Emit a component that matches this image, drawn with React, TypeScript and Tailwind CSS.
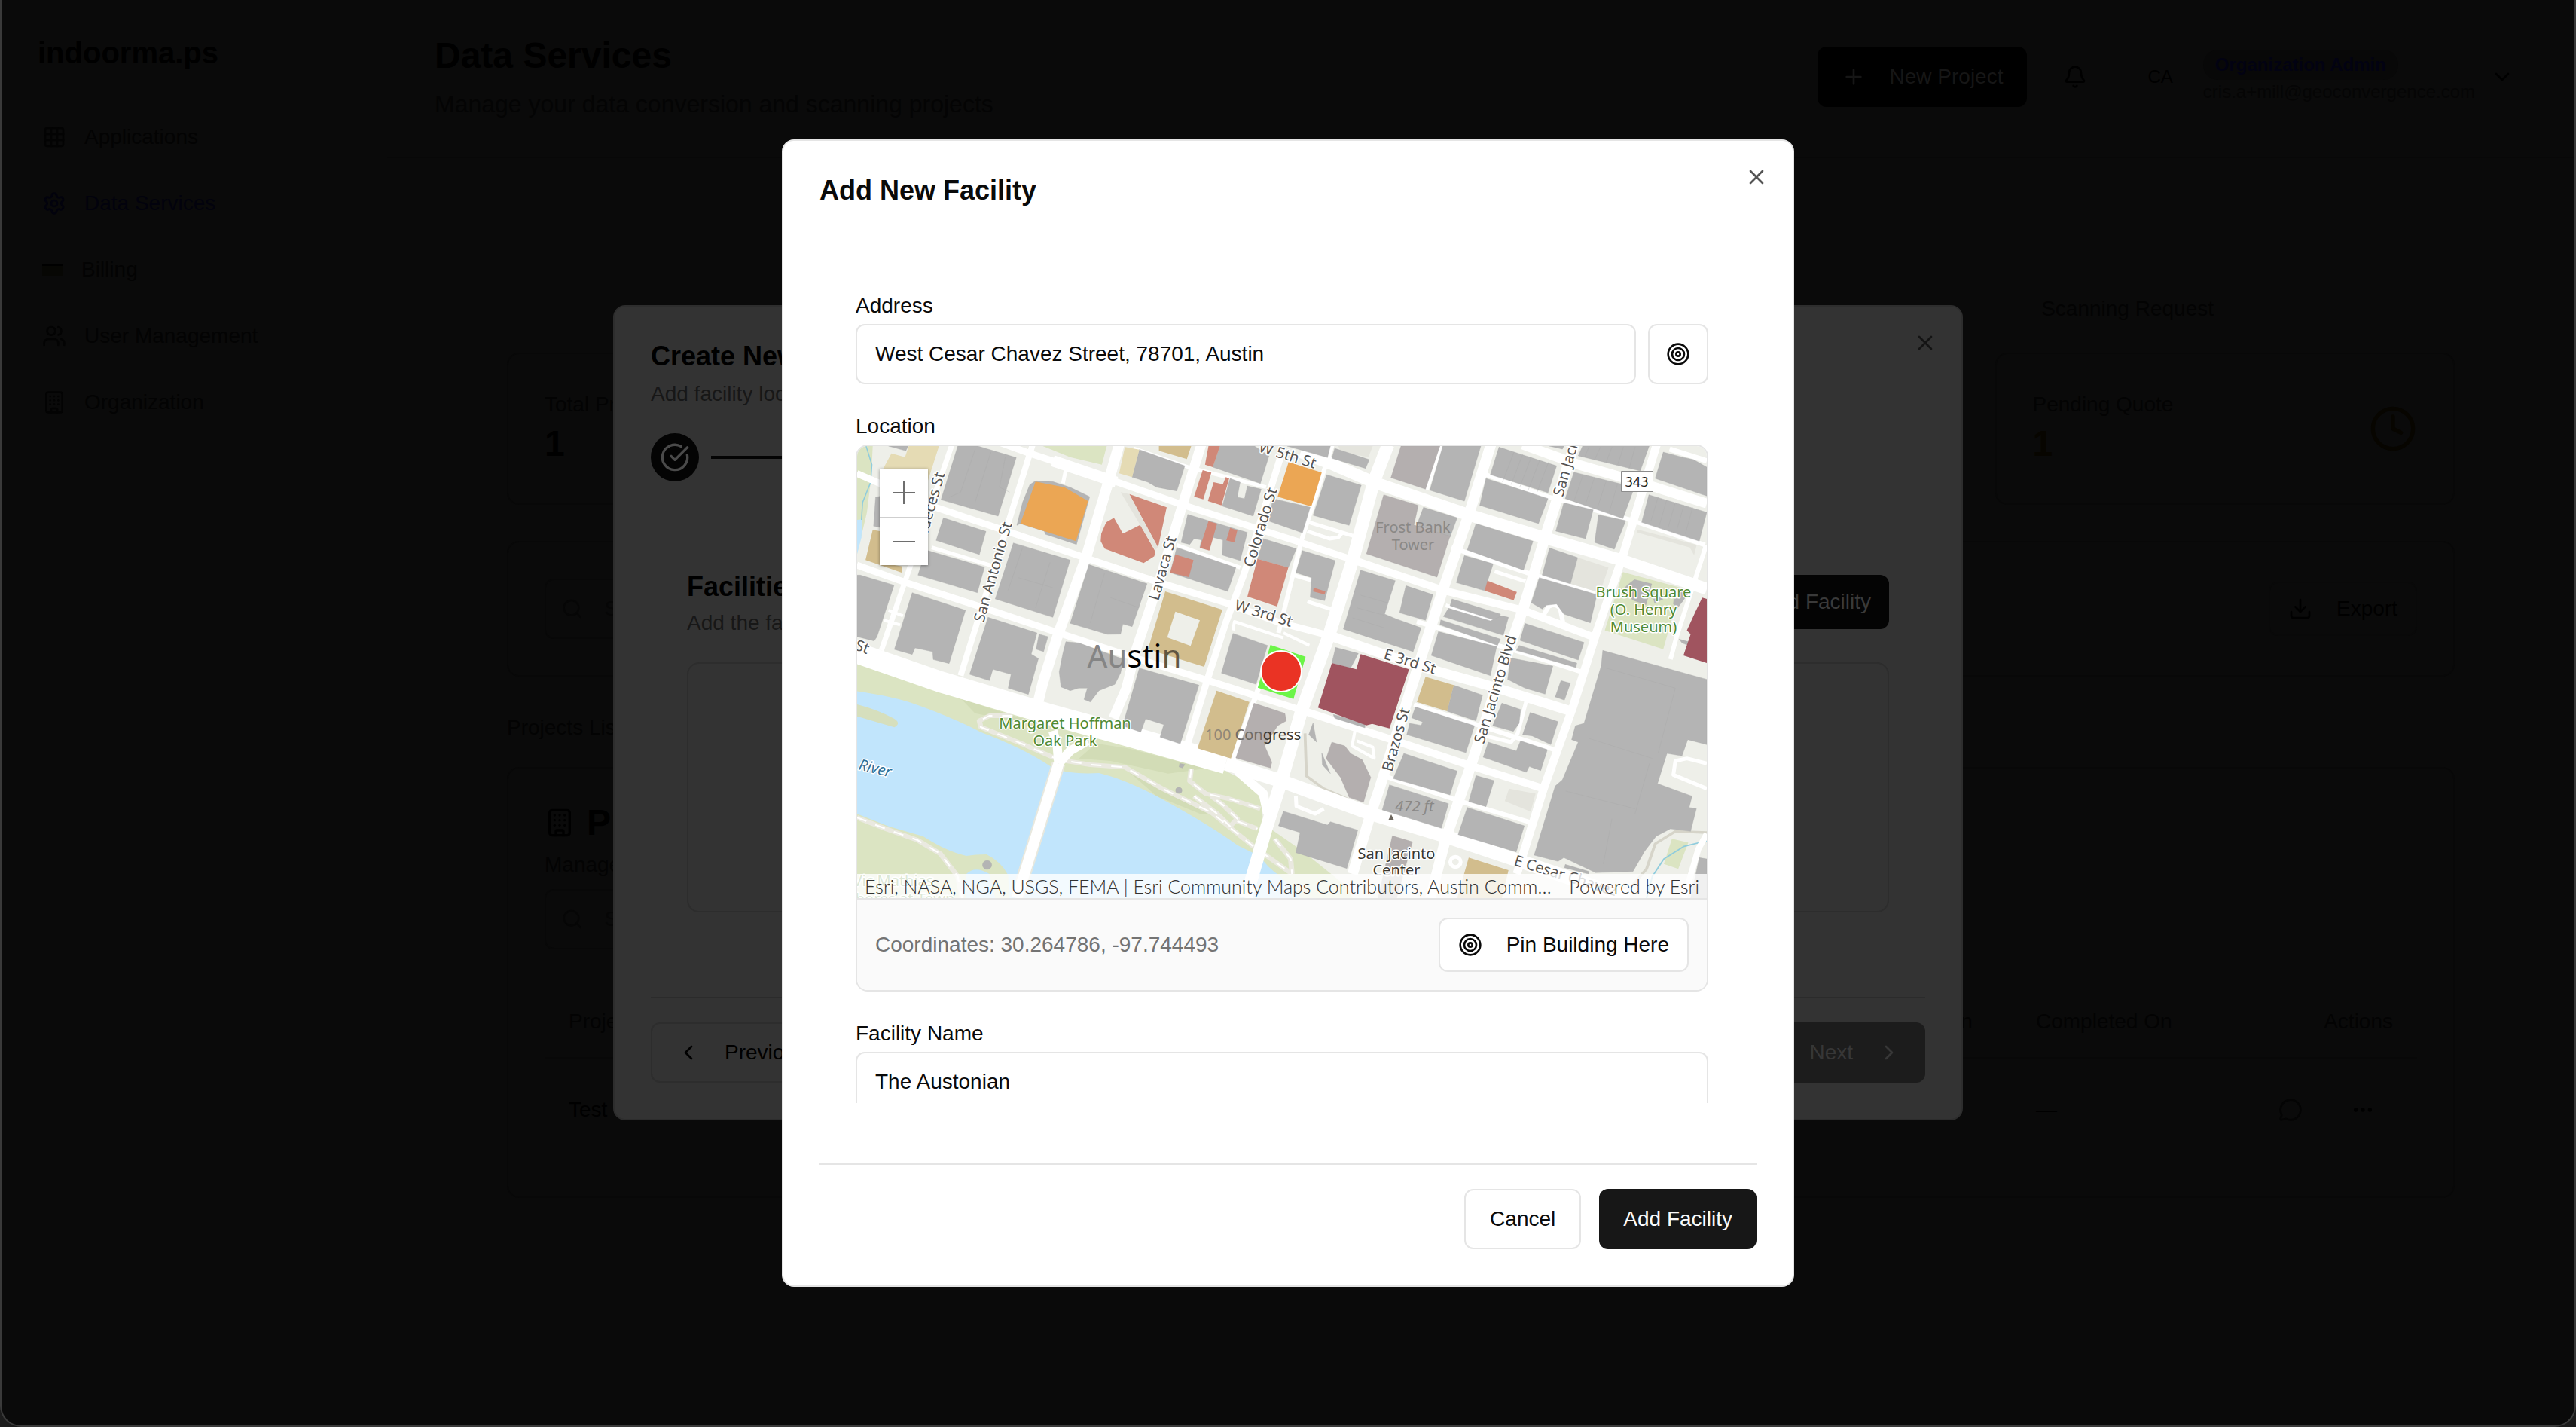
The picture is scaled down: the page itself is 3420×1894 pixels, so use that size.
import { useState } from 'react';
import {
  Bell,
  Building,
  ChevronDown,
  ChevronLeft,
  ChevronRight,
  CircleCheckBig,
  Clock,
  Download,
  Ellipsis,
  Grid3x3,
  MessageCircle,
  Plus,
  Search,
  Settings,
  Target,
  Users,
  X,
} from 'lucide-react';

// Building footprints, grouped by fill. The right half of the sheet is shifted by EAST.
const EAST = 'translate(1463 0)';

const WEST_GRAY = [
  '370,36 440,36 573,82 510,315 312,250',
  '320,322 468,376 445,468 295,412',
  '260,450 463,518 438,620 232,550',
  '20,550 32,550 149,590 90,795 80,812 20,795',
  '212,620 397,690 340,902 285,886 283,855 222,840 212,866 150,846',
  '563,422 760,490 700,718 500,645',
  '475,718 645,780 625,865 650,882 615,1025 545,1000 555,945 492,925 480,970 411,945',
  '652,785 683,795 668,855 642,845',
  '825,508 1027,584 975,755 943,745 935,785 890,786 760,742',
  '640,175 700,178 760,200 828,238 782,428 675,388 670,375 587,345 575,352 595,260 620,190',
  '1000,50 1158,115 1130,215 1060,200 1030,180 975,160',
  '1280,36 1400,36 1450,75 1420,185 1255,120',
  '1315,165 1350,180 1340,240 1365,245 1375,195 1423,208 1395,315 1288,275',
  '1168,308 1375,380 1350,492 1288,470 1290,410 1255,400 1243,450 1210,440 1215,410 1190,405 1175,428 1145,420',
  '1130,440 1335,520 1307,615 1107,540',
  '1430,405 1545,445 1517,520 1410,485',
  '1325,782 1445,830 1405,985 1285,940',
  '745,815 790,820 945,885 935,940 915,985 860,1010 830,1055 808,1045 820,1000 790,1000 760,1010 728,995 722,935 735,860',
  '1000,920 1207,988 1142,1222 1072,1195 1085,1145 1022,1122 1005,1175 942,1150',
  '85,240 100,236 100,360 78,355',
  '130,36 198,36 190,55',
];

const EAST_GRAY = [
  '50,36 200,36 190,82',
  '215,45 335,90 322,125 205,85',
  '0,245 130,280 103,382 -13,335',
  '187,150 307,192 265,352 140,312',
  '590,36 722,36 665,255 545,212',
  '785,40 985,115 955,222 755,150',
  '740,165 955,245 922,345 718,272',
  '1075,36 1306,36 1275,135 1060,75',
  '960,36 1010,36 1005,48',
  '1045,140 1255,200 1215,325 1015,245',
  '1010,262 1112,290 1085,405 982,375',
  '1130,310 1225,333 1185,447 1117,420',
  '1355,60 1420,80 1460,90 1506,120 1506,235 1327,165',
  '1305,230 1506,300 1480,415 1280,340',
  '523,280 640,322 615,400 500,350',
  '705,345 903,415 870,530 675,450',
  '665,472 765,505 745,575 738,613 637,580',
  '960,442 1058,480 1033,585 935,550',
  '925,560 1125,628 1102,740 1010,705 985,665 950,670 935,685 897,660',
  '305,530 425,572 388,705 430,725 515,760 487,855 245,765',
  '462,592 556,628 530,730 440,700',
  '103,452 217,492 180,652 130,638 135,560 80,540',
  '622,645 790,705 785,735 615,672',
  '610,682 755,732 795,712 818,718 800,790 592,715',
  '583,728 790,805 780,830 580,748',
  '575,775 777,835 755,950 550,870',
  '875,742 1080,818 1060,888 858,810',
  '855,830 1055,900 1052,918 845,850',
  '825,880 972,912 945,1024 875,1000 815,965',
  '1000,970 1033,980 1012,1048 980,1035',
  '218,838 297,862 270,920 205,900',
  '628,988 728,1028 705,1130 605,1092',
  '1255,568 1315,585 1295,668 1250,650 1215,610 1230,590',
  '1395,612 1440,625 1425,650 1405,680 1390,665',
  '1320,640 1350,625 1355,645 1325,662',
  '1145,850 1506,965 1506,1225 1440,1205 1420,1270 1368,1260 1335,1380 1455,1430 1445,1475 1470,1480 1450,1570 1380,1560 1330,1590 1290,1650 1250,1730 1120,1735 1010,1675 990,1690 907,1665 980,1390 1005,1365 1060,1215 1037,1205 1050,1150 1080,1140 1140,910',
  '495,1075 700,1150 670,1257 465,1185 475,1140 515,1148 520,1135 482,1118',
  '455,1260 640,1330 615,1425 418,1360',
  '405,1385 610,1460 585,1558 380,1485',
  '795,1060 860,1085 855,1140 835,1172 763,1150',
  '893,1097 990,1133 965,1225 900,1190 867,1185',
  '748,1215 845,1250 860,1210 953,1245 930,1328 890,1312 880,1335 730,1275',
  '705,1348 768,1368 740,1472 680,1452',
  '675,1475 873,1548 845,1652 643,1583',
  '37,1490 190,1545 200,1532 295,1565 257,1718 80,1655 95,1575 20,1548',
  '140,1138 152,1215 125,1185',
  '170,1258 200,1340 172,1305',
  '210,1105 320,1140 320,1158 215,1120',
  '1480,1675 1506,1680 1506,1836 1450,1836',
  '1015,1702 1098,1730 1095,1740 1012,1715',
  '1410,805 1506,835 1506,860 1420,820',
];

const EAST_TAUPE = [
  '445,36 580,36 530,208 410,162',
  '385,230 505,272 490,350 615,395 570,558 325,465',
  '205,1215 250,1230 270,1260 310,1285 340,1355 315,1455 265,1435 235,1355 185,1280',
  '415,1588 485,1612 430,1836 365,1836',
  '-65,1060 42,1100 47,1130 17,1150 -28,1230 -3,1295 -8,1318 -128,1278',
];

const RED = [
  '965,227 1095,280 1065,440',
  '912,322 943,385 1003,350 1055,455 1052,475 1015,502 880,445 866,415 868,385 885,340',
  '1240,36 1280,36 1255,120 1228,110',
  '1220,132 1250,142 1222,248 1190,238',
  '1258,180 1290,188 1300,160 1312,165 1285,272 1238,255',
  '1240,335 1270,345 1243,452 1210,442',
  '1315,362 1340,372 1330,420 1302,412',
  '1125,468 1188,490 1172,558 1107,540',
  '1410,485 1517,520 1478,675 1375,635',
  '2208,572 2310,617 2299,650 2198,612',
  '1605,600 1646,615 1643,627 1603,615',
];

const ORANGE = ['640,178 740,200 822,255 780,415 587,345', '1518,100 1633,142 1597,277 1480,238'];

const TAN = [
  '1068,36 1180,36 1165,88 1068,55',
  '75,370 100,375 100,500 178,515 175,540 50,490',
  '1090,615 1288,688 1225,915 1030,845',
  '1268,1010 1382,1055 1318,1280 1202,1240',
  '1993,955 2091,988 2068,1092 1963,1055',
  '2143,1675 2281,1725 2258,1836 2103,1836',
];

const BEIGE = [
  '140,65 187,80 200,36 305,36 265,180 100,150',
  '950,40 1000,50 975,160 930,145',
];

const MAROON = [
  '1768,865 1936,925 1868,1160 1808,1142 1788,1148 1620,1078 1668,900 1753,925',
  '2953,640 2969,645 2969,900 2888,870 2913,785 2900,770 2928,700',
];

const PALE = [
  '2521,480 2628,520 2598,620 2496,585',
  '2283,1400 2375,1420 2358,1492 2268,1450',
  '1690,36 1810,36 1795,80 1700,60',
  '2728,368 2934,430 2925,470 2910,440 2728,380',
];

// [points, width]
const STREETS: [string, number][] = [
  ['20,145 280,275 540,375 810,480 1070,580 1300,660 1490,740 1658,790', 9],
  ['1658,790 1963,910 2243,1000 2493,1090', 13],
  ['500,15 620,65 900,170 1150,270 1560,420 1743,490', 9],
  ['700,95 920,180', 15],
  ['1743,490 2053,610 2333,690 2583,800', 10],
  ['20,510 190,580 460,680 720,780 985,880 1240,970 1568,1090', 9],
  ['1568,1090 1863,1200 2153,1310 2403,1400', 10],
  ['1560,60 1663,105 1813,180 2143,310 2403,400 2673,490 2969,605', 16],
  ['2330,30 2523,110 2763,190 2969,265', 13],
  ['2840,48 2969,95', 7],
  ['20,860 310,975 690,1105 960,1190 1300,1300', 28],
  ['1300,1300 1493,1370 1803,1500 2063,1590 2323,1690 2700,1836', 18],
  ['350,30 105,850', 7],
  ['630,30 380,950', 8],
  ['930,30 895,170 815,480 720,780 665,980 650,1050', 14],
  ['1215,30 1150,270 1070,570 985,860 955,1000 910,1120', 13],
  ['1490,80 1365,540 1300,740 1235,970 1160,1250', 9],
  ['1670,30 1563,410 1483,780', 6],
  ['1420,980 1320,1300', 7],
  ['1863,30 1813,180 1743,480 1658,790 1563,1090 1493,1370 1440,1560 1370,1836', 17],
  ['2048,36 1998,210', 5],
  ['2220,30 2143,310 2053,610 1963,930 1833,1400 1803,1500 1740,1740', 14],
  ['2510,30 2413,380 2333,680 2243,980 2153,1300 2063,1600 2010,1836', 14],
  ['2795,30 2673,490 2583,790 2503,1080 2403,1400 2310,1740', 11],
  ['2967,430 2863,800 2843,885', 6],
  ['980,45 1170,120 1440,200', 5],
  ['745,130 735,185', 5],
  ['280,440 510,520', 5],
  ['1130,430 1350,520', 5],
  ['2203,150 2423,240 2703,330 2963,430', 6],
  ['2083,440 2343,540 2583,620', 6],
  ['2233,535 2340,575', 5],
  ['1963,735 2303,850 2533,935', 6],
  ['2063,670 2213,725 2250,745', 5],
  ['1953,1065 2183,1150 2453,1250', 6],
  ['1863,1355 2113,1450 2373,1540', 6],
  ['2343,1050 2313,1180 2290,1215 2200,1190', 5],
  ['2400,715 2420,675 2440,665 2460,680 2470,740', 6],
  ['1583,375 1660,405 1690,400 1705,380', 5],
  ['1590,340 1745,395', 5],
  ['1583,655 1665,685', 5],
  ['1535,550 1595,570', 5],
  ['1750,1160 1738,1230 1800,1270 1818,1280', 4],
  ['1755,1210 1810,1235 1815,1280', 4],
  ['1543,1430 1545,1470 1610,1500 1640,1480', 5],
  ['1325,770 1330,735 1500,800', 4],
  ['1500,780 1590,830', 4],
  ['130,690 180,712', 4],
  ['115,730 170,748', 4],
  ['2969,1300 2900,1280 2860,1290 2853,1345 2969,1400', 5],
  ['2969,1580 2940,1640 2890,1836', 8],
  ['720,1300 575,1836', 14],
  ['700,1170 715,1230 720,1300', 12],
  ['820,1210 760,1250 720,1300', 12],
  ['1340,1330 1430,1420 1445,1500', 12],
];

const TRAILS = [
  '560,1110 480,1110 445,1130 450,1155 600,1225 720,1285 830,1305 950,1315 1080,1400 1250,1495 1390,1625 1530,1740',
  '20,1515 120,1560 230,1605 310,1660 370,1750 385,1836',
  '1180,1320 1175,1370 1230,1420 1310,1440 1420,1480',
  '1190,1430 1270,1500 1315,1550 1340,1520 1290,1465 1250,1430',
  '1340,1530 1410,1560',
  '1470,1600 1525,1680 1530,1740',
];

const footprint = (points: string) => <polygon key={points} points={points} />;

function CityMap() {
  return (
    <div className="relative h-[600px] w-full overflow-hidden bg-[#eeefe9]">
      <svg className="absolute inset-0 size-full" viewBox="21 36 2948 1800" preserveAspectRatio="none" aria-hidden="true">
        <g fill="#dbe4c2">
          <polygon points="20,36 75,36 70,160 55,300 20,470" />
          <polygon points="665,36 887,36 870,110 760,80" />
          <path d="M20 885 L300 985 L700 1130 L960 1220 L1300 1330 L1420 1400 L1430 1540 L1568 1650 L1720 1790 L1740 1836 L20 1836 Z" />
          <polygon points="2678,538 2878,600 2818,845 2615,770" />
          <path d="M2848 1600 L2905 1615 L2870 1720 L2820 1700 Z" />
        </g>
        <g fill="#d2dcb6">
          <path d="M380 1040 L480 1080 L620 1130 L600 1140 L430 1100 Z" />
          <path d="M850 1220 L960 1240 L1230 1320 L1100 1340 L900 1290 L790 1280 Z" />
          <path d="M960 1330 L1100 1420 L1240 1500 L1210 1500 L1060 1430 Z" />
        </g>
        <g fill="#c1e5fc">
          <path d="M20 1012 Q130 1030 200 1055 Q330 1105 450 1175 Q600 1240 690 1310 Q740 1345 860 1338 Q960 1365 1100 1455 Q1250 1550 1340 1625 L1420 1670 Q1440 1710 1490 1750 L1560 1836 L548 1836 L545 1745 Q520 1690 470 1662 Q430 1662 400 1668 Q330 1650 250 1590 L130 1550 L20 1500 Z" />
          <path d="M400 1740 Q430 1705 480 1740 L500 1836 L400 1836 Z" />
          <polygon points="20,330 38,328 36,400 20,470" />
        </g>
        <path d="M20 1065 Q90 1085 150 1122 Q175 1140 150 1156 L20 1112 Z" fill="#d6dfbd" />
        <g fill="none" stroke="#b9b4a2" strokeOpacity="0.45" strokeWidth="10">
          <path d="M1575 1180 L1580 1350 L1640 1400 L1720 1440" />
          <path d="M2969 1575 L2860 1570 L2790 1620 L2760 1720 L2700 1800" />
        </g>
        <path d="M52 36 L72 110 L68 180 L40 260 L36 330" fill="none" stroke="#8fccdd" strokeWidth="4" />
        <path d="M2969 1608 L2890 1630 L2820 1680 L2780 1750 L2760 1836" fill="none" stroke="#8fccdd" strokeWidth="5" />

        <g fill="none" stroke="#eae9e0" strokeWidth="18" strokeLinejoin="round">
          {TRAILS.map((points) => (
            <polyline key={points} points={points} />
          ))}
        </g>
        <g fill="none" stroke="#ffffff" strokeWidth="6" strokeDasharray="36 34">
          {TRAILS.map((points) => (
            <polyline key={points} points={points} />
          ))}
        </g>

        <path d="M720 1300 L575 1836" stroke="#e8e8de" strokeWidth="18" vectorEffect="non-scaling-stroke" />
        <g fill="none" stroke="#ffffff" strokeLinejoin="round">
          {STREETS.map(([points, width]) => (
            <polyline key={points} points={points} strokeWidth={width} vectorEffect="non-scaling-stroke" />
          ))}
          <ellipse cx="2097" cy="1692" rx="18" ry="20" strokeWidth="5" vectorEffect="non-scaling-stroke" />
        </g>

        <g fill="#e4e4dd">{PALE.map(footprint)}</g>
        <g fill="#b4b4b4" stroke="#a9a9a9" strokeWidth="1">
          {WEST_GRAY.map(footprint)}
          <g transform={EAST}>{EAST_GRAY.map(footprint)}</g>
          <ellipse cx="472" cy="1704" rx="16" ry="18" />
          <ellipse cx="1137" cy="1407" rx="11" ry="12" />
          <polygon points="1140,1300 1158,1304 1150,1318 1138,1314" />
        </g>
        <g fill="#b4afaf" stroke="#a9a5a5" strokeWidth="1" transform={EAST}>
          {EAST_TAUPE.map(footprint)}
        </g>
        <g fill="#e5dbb4">{BEIGE.map(footprint)}</g>
        <g fill="#d2bd8d">{TAN.map(footprint)}</g>
        <g fill="#d08878">{RED.map(footprint)}</g>
        <g fill="#eba654">{ORANGE.map(footprint)}</g>
        <g fill="#a0545f">{MAROON.map(footprint)}</g>
        <polygon points="1125,695 1210,730 1178,832 1097,798" fill="#eeefe9" />
        <polygon points="935,220 965,227 1065,440 1055,450" fill="#e4e4dd" />

        {/* roof lines */}
        <g fill="none" stroke="#a6a6a6" strokeWidth="1">
          <path d="M430 50 L380 220 L340 240 M485 60 L430 260 M535 80 L515 200 L550 220" />
          <path d="M595 440 L545 610 M690 500 L640 680 M580 560 L700 600" />
          <path d="M880 540 L830 740 M900 640 L1000 680" />
          <path d="M1768 630 L1860 660 M1755 680 L1850 710 M1740 720 L1850 760" />
          <path d="M2300 60 L2260 180 M2330 70 L2290 190 M2360 80 L2320 200 M2390 90 L2350 210 M2420 100 L2380 220" />
          <path d="M2560 40 L2545 80 M2600 40 L2580 90 M2640 40 L2620 100 M2680 40 L2660 110 M2720 40 L2700 125" />
          <path d="M2540 150 L2510 250 M2580 160 L2550 260 M2620 175 L2590 280 M2660 185 L2630 300" />
          <path d="M2800 240 L2775 335 M2830 250 L2805 350 M2860 260 L2835 360 M2890 270 L2865 370 M2920 280 L2895 385" />
          <path d="M2620 920 L2860 1000 L2800 1260 M2560 1200 L2780 1280 M2480 1410 L2720 1480 M2640 1520 L2610 1700 M2770 1300 L2720 1500" />
        </g>
        <polygon points="1455,828 1577,875 1535,1043 1411,998" fill="#6cf547" />
      </svg>

      <svg
        className="absolute inset-0 size-full font-['Noto_Sans',sans-serif] text-[20px]"
        viewBox="0 0 1128 600"
        fill="#545454"
        stroke="#ffffff"
        strokeWidth="3"
        strokeLinejoin="round"
        paintOrder="stroke"
      >
        <text transform="translate(91 126) rotate(-74)">Nueces St</text>
        <text transform="translate(168 235) rotate(-74)">San Antonio St</text>
        <text transform="translate(400 206) rotate(-74)">Lavaca St</text>
        <text transform="translate(526 162) rotate(-73)">Colorado St</text>
        <text transform="translate(532 7) rotate(17)">W 5th St</text>
        <text transform="translate(500 217) rotate(17)">W 3rd St</text>
        <text transform="translate(698 282) rotate(17)">E 3rd St</text>
        <text transform="translate(937 68) rotate(-74)">San Jacinto</text>
        <text transform="translate(832 396) rotate(-73)">San Jacinto Blvd</text>
        <text transform="translate(710 433) rotate(-74)">Brazos St</text>
        <text transform="translate(871 556) rotate(17)">E Cesar Chavez</text>
        <text transform="translate(-4 270) rotate(20)">St</text>
        <g fill="#4f8a32" textAnchor="middle">
          <text x="276" y="375">Margaret Hoffman</text>
          <text x="276" y="398">Oak Park</text>
          <text x="1044" y="201">Brush Square</text>
          <text x="1044" y="224">(O. Henry</text>
          <text x="1044" y="247">Museum)</text>
          <text x="48" y="584">Vic Mathias</text>
          <text x="58" y="608">Shores at Town</text>
        </g>
        <text transform="translate(1 429) rotate(14)" fill="#2f7199" fontStyle="italic">River</text>
        <g textAnchor="middle" fill="#3a3630">
          <text x="716" y="548">San Jacinto</text>
          <text x="716" y="570">Center</text>
        </g>
        <g stroke="none" fill="#8a8886" textAnchor="middle">
          <text x="738" y="115">Frost Bank</text>
          <text x="738" y="138">Tower</text>
          <text x="740" y="485" fontStyle="italic">472 ft</text>
        </g>
        <text x="462" y="390" stroke="none" fill="#8f8778">
          100 <tspan fill="#6e6b66">Con</tspan><tspan fill="#3a3630">gress</tspan>
        </text>
        <path d="M709 489 l4 8 h-8 z" fill="#6d675e" stroke="none" />
        <rect x="1015" y="34" width="41" height="26" fill="#ffffff" stroke="#8c8c8c" strokeWidth="2" />
        <text x="1035" y="54" fill="#1c1c1c" stroke="none" textAnchor="middle" fontSize="18">343</text>
        <text x="368" y="294" stroke="none" textAnchor="middle" fontSize="42" fill="#000000">
          <tspan fill="#858585">Au</tspan>sti<tspan fill="#5f5641">n</tspan>
        </text>
        <circle cx="563" cy="299" r="26" fill="#ea3324" strokeWidth="4" />
      </svg>

      <div className="absolute top-[30px] left-[30px] flex w-16 flex-col bg-white text-[#6e6e6e] shadow-[0_1px_4px_rgba(0,0,0,0.4)]">
        <button aria-label="Zoom in" className="flex h-16 items-center justify-center">
          <svg className="size-8" viewBox="0 0 32 32" stroke="currentColor" strokeWidth="2"><path d="M1 16h30M16 1v30" /></svg>
        </button>
        <button aria-label="Zoom out" className="flex h-16 items-center justify-center border-t-2 border-[#cfcfcf]">
          <svg className="size-8" viewBox="0 0 32 32" stroke="currentColor" strokeWidth="2"><path d="M1 16h30" /></svg>
        </button>
      </div>

      <div className="absolute inset-x-0 bottom-0 flex h-8 items-center justify-between bg-white/80 px-2.5 font-[Lato,sans-serif] text-[25px] font-light whitespace-nowrap text-[#323232]">
        <span>Esri, NASA, NGA, USGS, FEMA | Esri Community Maps Contributors, Austin Comm…</span>
        <span>Powered by <a href="#esri">Esri</a></span>
      </div>
    </div>
  );
}

const NAV = [
  { label: 'Applications', icon: Grid3x3 },
  { label: 'Data Services', icon: Settings },
  { label: 'Billing', icon: null },
  { label: 'User Management', icon: Users },
  { label: 'Organization', icon: Building },
];

function Sidebar() {
  return (
    <aside className="w-[512px] shrink-0">
      <div className="px-12 pt-[42px] text-[40px] leading-14 font-bold text-black">indoorma.ps</div>
      <nav className="mt-12 flex flex-col gap-4 px-[54px] text-[#030303]">
        {NAV.map(({ label, icon: Icon }) => (
          <a
            key={label}
            href="#nav"
            className={label === 'Data Services' ? 'flex h-[72px] items-center gap-6 text-[#02020d]' : 'flex h-[72px] items-center gap-6'}
          >
            {Icon ? (
              <Icon size={32} />
            ) : (
              <span className="h-4 w-7 border-t-3 border-black bg-[#070704]" />
            )}
            {label}
          </a>
        ))}
      </nav>
    </aside>
  );
}

function PageHeader() {
  return (
    <header className="flex h-[210px] justify-between border-b-2 border-[#080808] pr-20 pl-[63px]">
      <div className="pt-[46px]">
        <h1 className="text-[48px] leading-14 font-bold text-black">Data Services</h1>
        <p className="mt-3 text-[32px] leading-12 text-[#040404]">Manage your data conversion and scanning projects</p>
      </div>
      <div className="mt-[62px] flex h-20 items-center self-start">
        <button className="flex h-20 items-center gap-8 rounded-xl bg-black px-8 text-[#161616]">
          <Plus size={32} />
          New Project
        </button>
        <button aria-label="Notifications" className="ml-12 text-black">
          <Bell size={32} />
        </button>
        <button className="ml-20 flex items-center text-2xl leading-8 text-black">
          CA
          <span className="ml-10 flex flex-col items-start text-[#050505]">
            <span className="rounded-full bg-[#080808] px-4 py-1 font-bold text-[#020212]">Organization Admin</span>
            <span>cris.a+mill@geoconvergence.com</span>
          </span>
          <ChevronDown size={32} className="ml-5" />
        </button>
      </div>
    </header>
  );
}

const STATS = [
  { label: 'Total Projects', value: 1 },
  { label: 'In Progress', value: 0 },
  { label: 'Completed', value: 0 },
  { label: 'Pending Quote', value: 1, pending: true },
];

function Projects() {
  return (
    <div className="mx-[159px] text-[#030303]">
      <div className="flex justify-end pt-[180px] pr-80">
        <button>Scanning Request</button>
      </div>
      <div className="mt-[38px] grid grid-cols-4 gap-12">
        {STATS.map(({ label, value, pending }) => (
          <div key={label} className="flex items-center justify-between rounded-2xl border-2 border-[#080808] px-12 py-[47px]">
            <div>
              <p>{label}</p>
              <p className={pending ? 'text-5xl leading-16 font-bold text-[#070500]' : 'text-5xl leading-16 font-bold text-black'}>{value}</p>
            </div>
            {pending && <Clock size={64} className="text-[#070500]" />}
          </div>
        ))}
      </div>
      <div className="mt-12 flex h-[180px] items-center justify-between rounded-2xl border-2 border-[#080808] px-12">
        <SearchBox label="Search projects" />
        <button className="flex h-[72px] items-center gap-8 rounded-xl border-2 border-[#090909] px-6 text-black">
          <Download size={32} />
          Export
        </button>
      </div>
      <h2 className="mt-12">Projects List</h2>
      <div className="mt-8 rounded-2xl border-2 border-[#080808] p-12">
        <h3 className="flex h-12 items-center gap-4 text-5xl leading-12 font-bold text-black">
          <Building size={40} strokeWidth={2} />
          Projects
        </h3>
        <p className="mt-3 mb-3">Manage your projects</p>
        <SearchBox label="Search project list" />
        <table className="mt-12 w-full table-fixed text-left">
          <thead>
            <tr className="h-24 border-b-2 border-[#080808]">
              <th className="px-8 font-normal">Project Name</th>
              <th className="w-[229px] px-8 font-normal">Created On</th>
              <th className="w-[280px] px-8 font-normal">Completed On</th>
              <th className="w-[258px] px-8 text-right font-normal">Actions</th>
            </tr>
          </thead>
          <tbody>
            <tr className="h-[136px] text-black">
              <td className="px-8">Test</td>
              <td className="px-8">7/25/2025</td>
              <td className="px-8">—</td>
              <td className="px-8">
                <div className="flex justify-end gap-4">
                  <button aria-label="Messages" className="flex w-20 justify-center text-[#040404]"><MessageCircle size={32} /></button>
                  <button aria-label="More" className="flex w-20 justify-center"><Ellipsis size={32} /></button>
                </div>
              </td>
            </tr>
          </tbody>
        </table>
      </div>
    </div>
  );
}

function SearchBox({ label }: { label: string }) {
  return (
    <label className="flex h-20 w-[760px] items-center gap-7 rounded-xl border-2 border-[#080808] px-5 text-[#060606]">
      <Search size={32} />
      <input aria-label={label} placeholder="Search projects..." className="w-full bg-transparent outline-none placeholder:text-[#060606]" />
    </label>
  );
}

function ProjectDialog() {
  return (
    <div className="absolute inset-0 flex items-center justify-center pb-0.5">
      <div className="relative w-[1792px] rounded-2xl border-2 border-[#2d2d2d] bg-[#333333] p-12 text-black">
        <button aria-label="Close project dialog" className="absolute top-8 right-8 text-[#141414]">
          <X size={32} />
        </button>
        <h2 className="text-4xl leading-9 font-semibold">Create New Project</h2>
        <p className="mt-3 text-[#171717]">Add facility locations</p>
        <div className="mt-8 flex items-center gap-4">
          <span className="flex size-16 items-center justify-center rounded-full bg-[#040404] text-[#4a4a4a]">
            <CircleCheckBig size={40} />
          </span>
          <span className="h-1 w-80 bg-[#040404]" />
        </div>
        <div className="mt-28 px-12">
          <div className="flex items-center justify-between">
            <div>
              <h3 className="text-4xl leading-14 font-semibold">Facilities</h3>
              <p className="text-[#171717]">Add the facilities for this project</p>
            </div>
            <button className="flex h-[72px] items-center rounded-xl bg-[#040404] px-6 text-[#3a3a3a]">Add Facility</button>
          </div>
          <div className="mt-8 h-[332px] rounded-2xl border-2 border-[#2d2d2d]" />
        </div>
        <div className="mt-28 flex items-center justify-between border-t-2 border-[#2b2b2b] pt-8">
          <button className="flex h-20 items-center gap-8 rounded-xl border-2 border-[#2d2d2d] px-8">
            <ChevronLeft size={32} />
            Previous
          </button>
          <button className="flex h-20 items-center gap-8 rounded-xl bg-[#1c1c1c] px-8 text-[#373737]">
            Next
            <ChevronRight size={32} />
          </button>
        </div>
      </div>
    </div>
  );
}

function FacilityDialog() {
  const [address, setAddress] = useState('West Cesar Chavez Street, 78701, Austin');
  const [name, setName] = useState('The Austonian');

  return (
    <div className="absolute inset-0 flex items-center justify-center pb-0.5">
      <div role="dialog" aria-labelledby="facility-title" className="relative w-[1344px] rounded-2xl border-2 border-[#e5e5e5] bg-white p-12 text-[#0a0a0a]">
        <button aria-label="Close" className="absolute top-8 right-8 text-[#545454]">
          <X size={32} />
        </button>
        <h2 id="facility-title" className="text-4xl leading-9 font-semibold">Add New Facility</h2>

        <div className="mt-[63px] h-[1130px] overflow-hidden pt-12 pr-16 pl-12">
          <label htmlFor="address" className="block leading-12">Address</label>
          <div className="flex gap-4">
            <input
              id="address"
              value={address}
              onChange={(e) => setAddress(e.target.value)}
              className="h-20 min-w-0 flex-1 rounded-xl border-2 border-[#e5e5e5] px-6 outline-none"
            />
            <button aria-label="Locate address" className="flex size-20 items-center justify-center rounded-xl border-2 border-[#e5e5e5]">
              <Target size={32} />
            </button>
          </div>

          <p className="mt-8 leading-12">Location</p>
          <div className="overflow-hidden rounded-2xl border-2 border-[#e5e5e5]">
            <CityMap />
            <div className="flex items-center justify-between border-t-2 border-[#e5e5e5] bg-[#fafafa] p-6">
              <span className="text-[#737373]">Coordinates: 30.264786, -97.744493</span>
              <button className="flex h-[72px] items-center gap-8 rounded-xl border-2 border-[#e5e5e5] bg-white px-6">
                <Target size={32} />
                Pin Building Here
              </button>
            </div>
          </div>

          <label htmlFor="facility-name" className="mt-8 block leading-12">Facility Name</label>
          <input
            id="facility-name"
            value={name}
            onChange={(e) => setName(e.target.value)}
            className="h-20 w-full rounded-xl border-2 border-[#e5e5e5] px-6 outline-none"
          />
        </div>

        <div className="mt-20 flex justify-end gap-6 border-t-2 border-[#e5e5e5] pt-8">
          <button className="h-20 rounded-xl border-2 border-[#e5e5e5] px-8">Cancel</button>
          <button className="h-20 rounded-xl bg-[#171717] px-8 text-[#fafafa]">Add Facility</button>
        </div>
      </div>
    </div>
  );
}

export default function App() {
  return (
    <div className="relative h-screen overflow-hidden bg-[#1c1c1c] font-['Liberation_Sans',Arial,sans-serif] text-[28px] leading-10">
      <div className="flex h-full overflow-hidden rounded-b-[28px] border-2 border-t-0 border-[#3a3a3a] bg-[#0a0a0a]">
        <Sidebar />
        <main className="min-w-0 flex-1">
          <PageHeader />
          <Projects />
        </main>
      </div>
      <ProjectDialog />
      <FacilityDialog />
    </div>
  );
}
